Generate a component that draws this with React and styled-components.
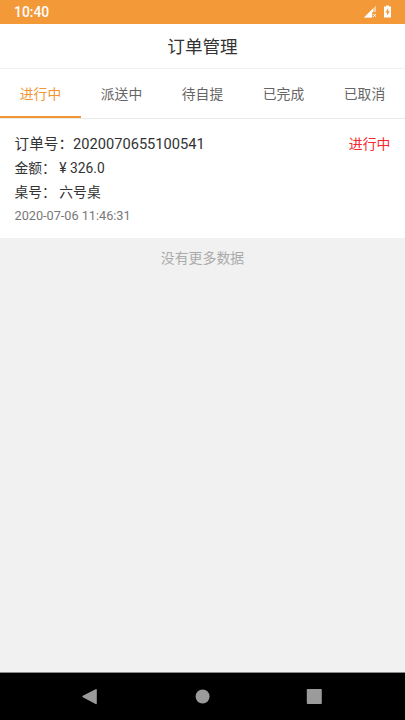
import React from "react";
import styled, { createGlobalStyle } from "styled-components";

const GlobalStyle = createGlobalStyle`
  * {
    box-sizing: border-box;
  }

  body {
    margin: 0;
    font-family: Roboto, "Noto Sans CJK SC", sans-serif;
    color: #333;
  }
`;

const Screen = styled.div`
  display: flex;
  flex-direction: column;
  height: 100vh;
  overflow: hidden;
  background: #f1f1f1;
`;

const StatusBar = styled.div`
  display: flex;
  justify-content: space-between;
  align-items: center;
  flex: none;
  height: 23.6px;
  padding: 1px 14.5px 0 14px;
  background: #f39938;
  color: #fff;
`;

const Clock = styled.span`
  font-size: 13.9px;
  font-weight: 500;
  line-height: 20px;
`;

const StatusIcons = styled.div`
  display: flex;
  align-items: center;
  gap: 7px;
  padding-bottom: 1.4px;
`;

const Header = styled.h1`
  flex: none;
  height: 44.4px;
  margin: 0;
  background: #fff;
  font-size: 17.6px;
  font-weight: 400;
  line-height: 46px;
  text-align: center;
`;

const Tabs = styled.nav`
  display: flex;
  flex: none;
  height: 51px;
  border-top: 1px solid #f1f1f1;
  border-bottom: 1px solid #ebebeb;
  background: #fff;
`;

const Tab = styled.button`
  flex: 1;
  height: 49px;
  padding: 3px 0 0;
  border: 0;
  border-bottom: 2px solid ${(props) => (props.$active ? "#f29635" : "transparent")};
  background: none;
  color: ${(props) => (props.$active ? "#f29635" : "#666")};
  font-family: inherit;
  font-size: 13.8px;
  line-height: 44px;
`;

const OrderCard = styled.section`
  display: flex;
  justify-content: space-between;
  flex: none;
  height: 119.5px;
  padding: 13px 14.5px 0;
  background: #fff;
`;

const OrderInfo = styled.div`
  padding-top: 1px;
`;

const OrderNumber = styled.div`
  font-size: 14.65px;
  line-height: 23px;
`;

const OrderLine = styled.div`
  font-size: 13.8px;
  line-height: 24px;
  white-space: pre;
`;

const OrderTime = styled.div`
  color: #777;
  font-size: 12.7px;
  line-height: 24px;
`;

const OrderStatus = styled.div`
  color: #f8282c;
  font-size: 13.9px;
  line-height: 24px;
`;

const NoMore = styled.div`
  flex: 1;
  padding-top: 8px;
  color: #aaa;
  font-size: 13.9px;
  line-height: 24px;
  text-align: center;
`;

const NavBar = styled.div`
  display: flex;
  justify-content: center;
  align-items: center;
  flex: none;
  gap: 96px;
  height: 48px;
  padding-right: 1px;
  border-top: 1px solid #888;
  background: #000;
`;

const NavIcon = styled.svg`
  width: 16px;
  height: 16px;
  fill: #9b9b9b;
`;

const tabs = ["进行中", "派送中", "待自提", "已完成", "已取消"];

const SignalIcon = () => (
  <svg width="13" height="13" viewBox="0 0 13 13">
    <path d="M0 12.5 12 .5V7H8.5v5.5z" fill="#f9cc9b" />
    <path d="M0 12.5 9 3.5V7H8v5.5z" fill="#fff" />
    <path d="m9.2 9 2.8 2.8m0-2.8-2.8 2.8" stroke="#fff" strokeWidth="1" />
  </svg>
);

const BatteryIcon = () => (
  <svg width="7" height="13" viewBox="0 0 7 13">
    <path d="M2 .5h3v1h2v11H0v-11h2z" fill="#fff" />
    <path d="M4.2 3 1.4 7.4h1.7v3.2l2.7-4.4H4.2z" fill="#f39938" />
  </svg>
);

const App = () => {
  return (
    <Screen>
      <GlobalStyle />
      <StatusBar>
        <Clock>10:40</Clock>
        <StatusIcons>
          <SignalIcon />
          <BatteryIcon />
        </StatusIcons>
      </StatusBar>
      <Header>订单管理</Header>
      <Tabs>
        {tabs.map((tab, i) => (
          <Tab key={tab} $active={i === 0}>
            {tab}
          </Tab>
        ))}
      </Tabs>
      <OrderCard>
        <OrderInfo>
          <OrderNumber>订单号：2020070655100541</OrderNumber>
          <OrderLine>金额： ¥ 326.0</OrderLine>
          <OrderLine>桌号： 六号桌</OrderLine>
          <OrderTime>2020-07-06 11:46:31</OrderTime>
        </OrderInfo>
        <OrderStatus>进行中</OrderStatus>
      </OrderCard>
      <NoMore>没有更多数据</NoMore>
      <NavBar>
        <NavIcon viewBox="0 0 16 16">
          <path d="M.8 6.8 13.6.2q1.2-.5 1.2.7v13.4q0 1.2-1.2.7L.8 8.2q-1-.7 0-1.4z" />
        </NavIcon>
        <NavIcon viewBox="0 0 16 16">
          <circle cx="8.6" cy="7.5" r="7" />
        </NavIcon>
        <NavIcon viewBox="0 0 16 16">
          <rect x=".8" y="0" width="15" height="15" rx=".8" />
        </NavIcon>
      </NavBar>
    </Screen>
  );
};

export default App;
